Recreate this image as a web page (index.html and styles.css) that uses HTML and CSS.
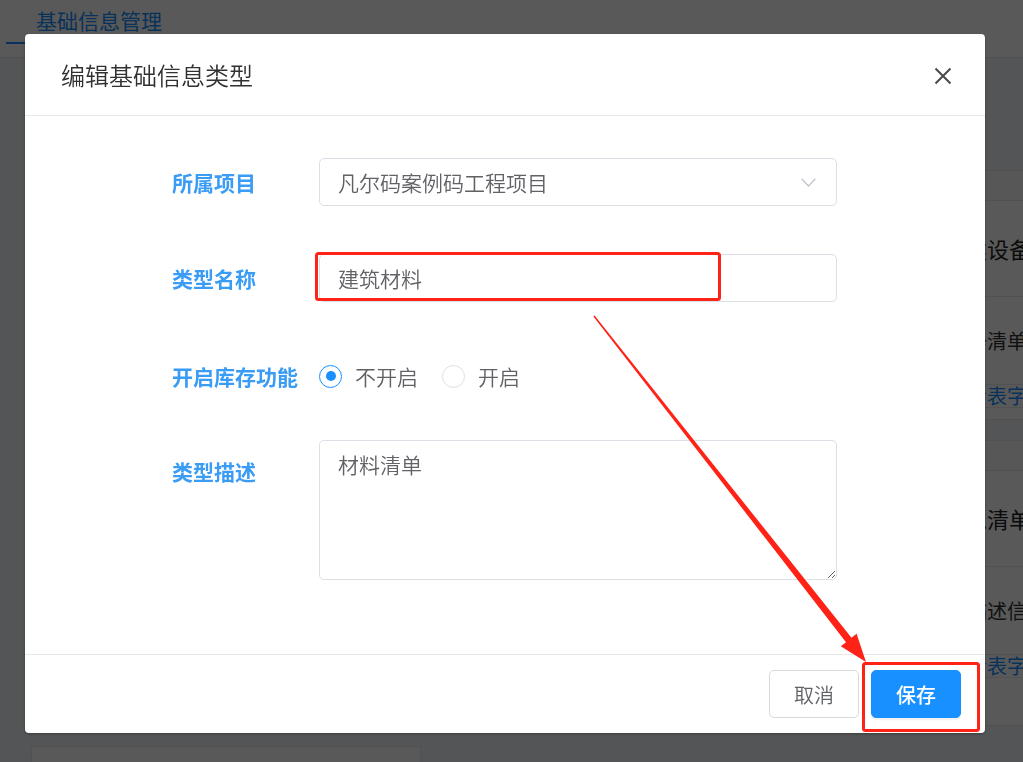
FILE: index.html
```html
<!DOCTYPE html>
<html lang="zh-CN">
<head>
    <meta charset="UTF-8">
    <title>基础信息管理</title>
    <link rel="stylesheet" href="styles.css">
</head>
<body>
    <div class="page">
        <header class="topbar">
            <div class="tab active">基础信息管理</div>
        </header>
        <main class="content">
            <div class="card-grid">
                <div class="type-card"></div>
                <div class="type-card"></div>
                <div class="type-card">
                    <div class="card-band"></div>
                    <div class="card-title">机械工程类设备</div>
                    <div class="card-desc">描述：设备清单</div>
                    <div class="card-link">配置和查看表字段</div>
                </div>
                <div class="type-card"></div>
                <div class="type-card"></div>
                <div class="type-card">
                    <div class="card-band"></div>
                    <div class="card-title">基础材料总清单</div>
                    <div class="card-desc">查看类型描述信息</div>
                    <div class="card-link">配置和查看表字段</div>
                </div>
                <div class="type-card"></div>
            </div>
        </main>
    </div>

    <div class="mask"></div>

    <div class="dialog-wrap">
        <div class="dialog">
            <div class="dialog-header">
                <span class="dialog-title">编辑基础信息类型</span>
                <svg class="close-icon" width="18" height="18" viewBox="0 0 18 18">
                    <path d="M1.5 1.5 L16.5 16.5 M16.5 1.5 L1.5 16.5" stroke="#4a4a4a" stroke-width="2" fill="none"/>
                </svg>
            </div>
            <div class="dialog-body">
                <div class="form-item item-project">
                    <label class="form-label">所属项目</label>
                    <div class="select">
                        <span>凡尔码案例码工程项目</span>
                        <svg width="15" height="9" viewBox="0 0 15 9">
                            <path d="M0.7 0.7 L7.5 8 L14.3 0.7" stroke="#c0c4cc" stroke-width="1.3" fill="none"/>
                        </svg>
                    </div>
                </div>
                <div class="form-item item-name">
                    <label class="form-label">类型名称</label>
                    <input class="text-input" type="text" value="建筑材料">
                </div>
                <div class="form-item item-stock">
                    <label class="form-label">开启库存功能</label>
                    <div class="radio-group">
                        <span class="radio checked"><span class="radio-dot"></span></span>
                        <span class="radio-text">不开启</span>
                        <span class="radio"></span>
                        <span class="radio-text">开启</span>
                    </div>
                </div>
                <div class="form-item item-desc">
                    <label class="form-label">类型描述</label>
                    <textarea class="textarea">材料清单</textarea>
                </div>
            </div>
            <div class="dialog-footer">
                <button class="btn">取消</button>
                <button class="btn btn-primary">保存</button>
            </div>
        </div>
    </div>

    <svg class="annotations" width="1023" height="762" viewBox="0 0 1023 762">
        <rect x="316.5" y="253.5" width="403" height="46" rx="2" fill="none" stroke="#ff2216" stroke-width="3"/>
        <rect x="863.5" y="663.5" width="115" height="67" rx="2" fill="none" stroke="#ff2216" stroke-width="3"/>
        <polygon fill="#ff2216" points="593.4,316.4 846,642.2 840.8,646.2 866,662 856.6,633.8 851.5,637.8 594.6,315.6"/>
    </svg>
</body>
</html>
```

FILE: styles.css
```css
body {
    margin: 0;
    font-family: "Noto Sans CJK SC", "Noto Sans", sans-serif;
    background: #f0f2f5;
    overflow: hidden;
}

.page {
    width: 1023px;
    height: 762px;
    overflow: hidden;
}

.topbar {
    height: 57px;
    background: #fff;
    border-bottom: 1px solid #e8e8e8;
    padding-left: 6px;
}

.tab {
    display: inline-block;
    padding: 0 30px 2px;
    line-height: 40px;
    font-size: 21px;
    color: #1890ff;
    border-bottom: 2px solid #1890ff;
}

.content {
    padding: 112px 0 0 31px;
}

.card-grid {
    display: grid;
    grid-template-columns: repeat(3, 390px);
    grid-template-rows: 250px 286px 60px;
    column-gap: 20px;
    row-gap: 20px;
}

.type-card {
    background: #fff;
    border: 1px solid #e8e8e8;
    border-radius: 2px;
}

.card-band {
    height: 29px;
    background: #fafafa;
    border-bottom: 1px solid #e8e8e8;
}

.card-title {
    height: 95px;
    line-height: 95px;
    padding-left: 25px;
    font-size: 22px;
    color: #222;
    border-bottom: 1px solid #e8e8e8;
    white-space: nowrap;
}

.card-desc {
    height: 87px;
    line-height: 87px;
    padding-left: 35px;
    font-size: 20px;
    color: #333;
    border-bottom: 1px solid #e8e8e8;
    white-space: nowrap;
}

.card-link {
    height: 22px;
    line-height: 22px;
    padding-left: 35px;
    font-size: 20px;
    color: #1890ff;
    border-bottom: 1px solid #e8e8e8;
    white-space: nowrap;
}

.mask {
    position: fixed;
    top: 0;
    left: 0;
    right: 0;
    bottom: 0;
    background: rgba(0, 0, 0, 0.65);
}

.dialog-wrap {
    position: fixed;
    top: 0;
    left: 0;
    right: 0;
    bottom: 0;
}

.dialog {
    margin: 34px 0 0 25px;
    width: 960px;
    height: 699px;
    background: #fff;
    border-radius: 4px;
    box-shadow: 0 1px 3px rgba(0, 0, 0, 0.3);
    display: flex;
    flex-direction: column;
}

.dialog-header {
    height: 81px;
    border-bottom: 1px solid #e8e8e8;
    display: flex;
    align-items: center;
    justify-content: space-between;
    padding: 0 33px 0 36px;
}

.dialog-title {
    font-size: 24px;
    font-weight: 350;
    color: #303133;
}

.close-icon {
    margin-top: 3px;
}

.dialog-body {
    flex: 1;
    padding: 42px 0 0 147px;
}

.form-item {
    display: flex;
    align-items: center;
}

.item-project { margin-bottom: 48px; }
.item-name { margin-bottom: 50px; }
.item-stock { margin-bottom: 40px; }

.item-desc {
    align-items: flex-start;
}

.form-label {
    width: 147px;
    font-size: 21px;
    font-weight: bold;
    color: #3a9cf5;
    line-height: 48px;
}

.item-desc .form-label {
    padding-top: 7px;
}

.select,
.text-input,
.textarea {
    box-sizing: border-box;
    width: 518px;
    border: 1px solid #dcdfe6;
    border-radius: 5px;
    font-family: inherit;
    font-size: 21px;
    font-weight: 350;
    color: #606266;
    background: #fff;
}

.select {
    height: 48px;
    display: flex;
    align-items: center;
    justify-content: space-between;
    padding: 0 20px 0 18px;
}

.text-input {
    height: 48px;
    padding: 0 18px;
    outline: none;
}

.textarea {
    height: 140px;
    padding: 11px 18px;
    line-height: 24px;
    outline: none;
    resize: vertical;
}

.radio-group {
    height: 48px;
    display: flex;
    align-items: center;
}

.radio {
    box-sizing: border-box;
    width: 23px;
    height: 23px;
    border-radius: 50%;
    border: 1px solid #dcdfe6;
    display: flex;
    align-items: center;
    justify-content: center;
}

.radio.checked {
    border: 1.5px solid #1890ff;
}

.radio-dot {
    width: 10px;
    height: 10px;
    border-radius: 50%;
    background: #1890ff;
}

.radio-text {
    font-size: 21px;
    font-weight: 350;
    color: #606266;
    margin: 0 24px 0 13px;
}

.dialog-footer {
    border-top: 1px solid #e8e8e8;
    padding: 15px 24px;
    display: flex;
    justify-content: flex-end;
    gap: 12px;
}

.btn {
    width: 90px;
    height: 48px;
    border: 1px solid #d9d9d9;
    border-radius: 5px;
    background: #fff;
    font-family: inherit;
    font-size: 20px;
    font-weight: 350;
    color: #606266;
}

.btn-primary {
    background: #1890ff;
    border-color: #1890ff;
    color: #fff;
    font-weight: 500;
    box-shadow: 0 2px 2px rgba(0, 0, 0, 0.06);
}

.annotations {
    position: fixed;
    top: 0;
    left: 0;
    pointer-events: none;
}
```
